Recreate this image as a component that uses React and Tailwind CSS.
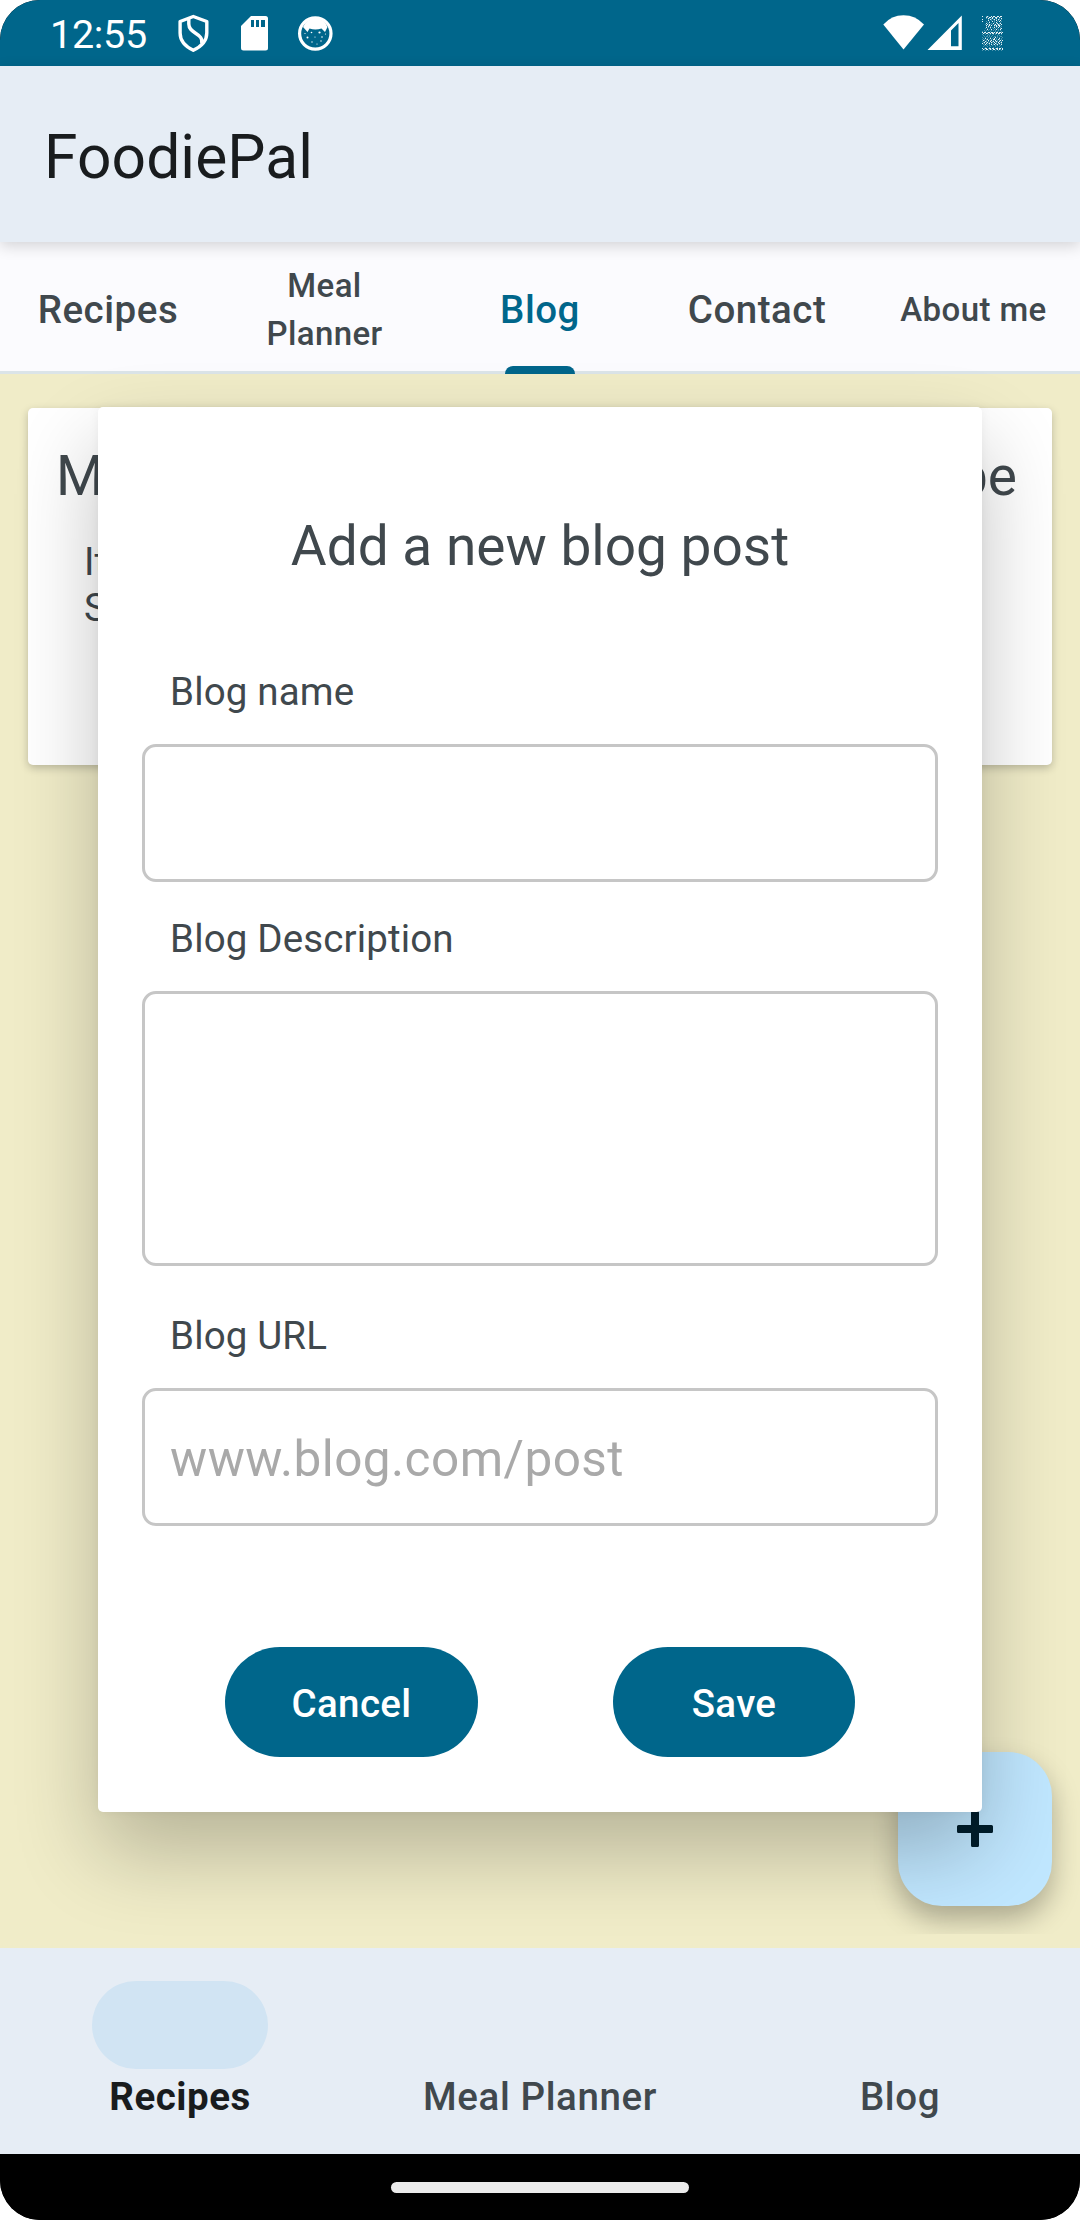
import React from "react";

const tabs = [
  { label: "Recipes", cls: "text-[38.5px] tracking-[0.55px]" },
  { label: "Meal Planner", cls: "pl-[1px] text-[33px] tracking-[0.4px]", inner: "w-[130px]" },
  { label: "Blog", cls: "text-[38.5px] tracking-[0.5px]", active: true },
  { label: "Contact", cls: "pl-[2px] text-[38.5px] tracking-[0.5px]" },
  { label: "About me", cls: "pl-[3px] text-[33px] tracking-[0.4px]" },
];

// Dithered battery glyph: one character per pixel, "#" bright and "+" dim.
const battery = [
  "#...+#+..#.##..##.##.",
  "....#+.##.#+.##+.#+..",
  "....+.#+.+#..+#..+.#.",
  "#.....+.#+.+#.+.#+.+.",
  "......#..+..+.#.+.#..",
  "#...+..+..#.+..+.#.+.",
  ".....+.#....+.#...+..",
  "....#.+..+.#..+#.+#..",
  "...+.#.#+.+.+#.+#+.#.",
  "....#.+#.#..#+#.##+..",
  "....+.#.+...+.#+.#.+.",
  "....#.+.#.+.#.+.#.+..",
  "...+.+..+..+.+.+..+#.",
  ".....#.+.#..+.#.+.#..",
  "..+.+.+..+.+.+..+.+..",
  "+..+....+....+.+...+.",
  "#.##.+##.##+#.##.##+#",
  ".#+.##.+#.##.+#.##.#.",
  "+..+..+.+..+.+..+..+.",
  ".+...+.+..+....+.+...",
  "..+.++.+.+..++.+..++.",
  "+..+..+.+..+.#.+.+..+",
  ".+.#.+..#.+.#.+..#.+.",
  "+.+.+#.+.+.##.+.#+.+.",
  ".#+.+.#.+#.+.#.+.+#.#",
  "+..#+.+.#.+#.+#+.#.+.",
  ".+#.+#.+.#+.#.+.#.+#.",
  "#.+.#.+#.+.+.#+.+#.+.",
  ".+.#.+.+.#.+#.+#.+.#.",
  "..+.+..+..+..+.+..+..",
  ".+...+..+....+...+...",
  "...+...+...+...+...+.",
  "#.+##.+##.##.+##.##.#",
  ".#+.##.+#+.##.+#.#+.#",
  "+..+..+...+..+..+..+.",
];

function StatusBar() {
  return (
    <div className="flex h-[66px] shrink-0 items-center bg-[#00668b] pl-[50px] text-white">
      <span className="w-[124px] whitespace-nowrap pt-[4px] text-[39.5px] leading-[66px] tracking-[-0.3px]">12:55</span>
      <svg className="h-[66px] w-[190px]" viewBox="0 0 190 66">
        <g transform="translate(-13.700 0)" fill="none" stroke="#fff" strokeWidth="3.4" strokeLinejoin="round">
          <path d="M33 16.500 46.500 21.500V33C46.500 41 41 46.500 33 50.300 25 46.500 19.800 41 19.800 33V21.500Z" />
          <path d="M28.500 18.500V24C28.500 34 43.500 33 41.500 43.500" />
        </g>
        <path d="M77 16H91.500Q94 16 94 18.500V48Q94 50.500 91.500 50.500H69.500Q67 50.500 67 48V26Z" fill="#fff" />
        <path d="M77 20h3v7h-3zM82 20h3v7h-3zM87 20h4v7h-4z" fill="#00668b" />
        <circle cx="141.300" cy="33.500" r="15.700" fill="none" stroke="#fff" strokeWidth="3.2" />
        <path d="M129 27Q132 19 141.300 18.500 151 19 153.500 27L151 32 147.500 28.500Q141.300 30.500 135.500 28.500L133.500 32Z" fill="#fff" />
        <g fill="#fff">
          <circle cx="137.500" cy="32.500" r=".8" /><circle cx="145.500" cy="32.500" r="1.100" />
          <circle cx="133.500" cy="37.500" r="1" /><circle cx="141" cy="37" r=".6" />
          <circle cx="148" cy="37" r=".8" /><circle cx="138" cy="42" r=".7" />
          <circle cx="143" cy="44" r=".6" /><circle cx="147" cy="41" r=".7" />
          <circle cx="131" cy="33.500" r=".6" /><circle cx="151.500" cy="34" r=".6" />
        </g>
      </svg>
      <svg className="ml-auto h-[66px] w-[197px]" viewBox="0 0 197 66">
        <path d="M0.300 24.500Q8.500 15.300 20.500 15.300 32.500 15.300 41 24.500L20.500 49.500Z" fill="#fff" />
        <path fillRule="evenodd" d="M44.500 50 78.800 15.500V50ZM68 30.500V46.300H75.500V23Z" fill="#fff" />
        <g transform="translate(99 16)" fill="#fff">
          {battery.map((row, y) =>
            row.split("").map((c, x) =>
              c === "." ? null : <rect key={x + "-" + y} x={x} y={y} width="1" height="1" opacity={c === "#" ? 0.9 : 0.3} />
            )
          )}
        </g>
      </svg>
    </div>
  );
}

function Field({ label, height, gap, placeholder }) {
  return (
    <label className={"flex flex-col " + gap}>
      <span className="ml-[28px] text-[38.5px] leading-[46px] tracking-[0.15px]">{label}</span>
      <input
        placeholder={placeholder}
        className={"mt-[29px] w-full rounded-[14px] border-[3px] border-[#c6c6c6] bg-white px-[25px] pt-[4px] text-[49.5px] tracking-[0.45px] placeholder:text-[#a9a9a9] outline-none " + height}
      />
    </label>
  );
}

export default function App() {
  return (
    <div className="relative flex h-[2220px] w-[1080px] flex-col overflow-hidden rounded-[40px] bg-black font-['Roboto',sans-serif] text-[#40484d]">
      <StatusBar />
      <header className="relative z-10 flex h-[176px] shrink-0 items-center bg-[#e6edf5] px-[44px] text-[60.5px] text-[#191c1e] shadow-[0_4px_14px_rgba(0,0,0,0.16)]">
        <h1 className="pt-[9px] tracking-[0.1px]">FoodiePal</h1>
      </header>
      <nav className="grid h-[132px] shrink-0 grid-cols-5 border-b-[3px] border-[#dbe4e8] bg-[#fbfbfe]">
        {tabs.map((t) => (
          <div key={t.label} className={"relative flex items-center justify-center whitespace-nowrap pt-[7px] text-center font-medium leading-[48px] " + t.cls + (t.active ? " text-[#00668b]" : "")}>
            <span className={t.inner ? "w-[130px] whitespace-normal" : ""}>{t.label}</span>
            {t.active && <i className="absolute -bottom-[3px] left-[73px] h-[8px] w-[70px] rounded-t-[8px] bg-[#00668b]" />}
          </div>
        ))}
      </nav>
      <main className="h-[1574px] shrink-0 bg-[#f0ecc8] px-[28px] pt-[34px]">
        <article className="h-[357px] rounded-[5px] bg-white px-[28px] pt-[36px] shadow-[0_3px_8px_rgba(0,0,0,0.22)]">
          <h2 className="flex justify-between text-[55px] leading-[64px]"><span>My</span><span className="mr-[7px]">Recipe</span></h2>
          <p className="ml-[28px] mt-[31px] text-[38.5px] leading-[46px]">It<br />S</p>
        </article>
      </main>
      <button className="absolute left-[898px] top-[1752px] flex size-[154px] items-center justify-center rounded-[44px] bg-[#c0e7ff] shadow-[0_14px_28px_rgba(0,0,0,0.28)] [clip-path:inset(-28px)]">
        <svg width="36" height="36" viewBox="0 0 36 36"><path d="M15.500 0h5q1.500 0 1.500 1.500V14h12.500q1.500 0 1.500 1.500v5q0 1.500-1.500 1.500H22v12.500q0 1.500-1.500 1.500h-5q-1.500 0-1.500-1.500V22H1.500Q0 22 0 20.500v-5Q0 14 1.500 14H14V1.500Q14 0 15.500 0Z" fill="#001e2c" /></svg>
      </button>
      <nav className="relative grid h-[206px] shrink-0 grid-cols-3 bg-[#e6edf5] text-center text-[38.5px] font-medium leading-[46px] tracking-[0.6px]">
        {["Recipes", "Meal Planner", "Blog"].map((n, i) => (
          <div key={n} className={"flex flex-col items-center pt-[33px] " + (i === 0 ? "font-bold tracking-[0.5px] text-[#191c1e]" : "")}>
            <i className={"h-[88px] w-[176px] rounded-full " + (i === 0 ? "bg-[#d1e4f3]" : "")} />
            <span className="mt-[5px]">{n}</span>
          </div>
        ))}
      </nav>
      <div className="flex h-[66px] shrink-0 items-center justify-center bg-black">
        <i className="h-[11px] w-[298px] rounded-full bg-[#ebebeb]" />
      </div>
      <section className="absolute left-[98px] top-[407px] z-20 flex h-[1405px] w-[884px] flex-col rounded-[5px] bg-white px-[44px] pt-[107px] shadow-[0_40px_84px_rgba(0,0,0,0.24),0_0_12px_rgba(0,0,0,0.05)]">
        <h2 className="text-center text-[55px] leading-[64px]">Add a new blog post</h2>
        <Field label="Blog name" gap="mt-[91px]" height="h-[138px]" />
        <Field label="Blog Description" gap="mt-[34px]" height="h-[275px]" />
        <Field label="Blog URL" gap="mt-[47px]" height="h-[138px]" placeholder="www.blog.com/post" />
        <div className="mt-[121px] flex pl-[83px] text-[38.5px] font-medium tracking-[0.35px] text-white">
          <button className="h-[110px] w-[253px] rounded-full bg-[#00668b] pt-[3px]">Cancel</button>
          <button className="ml-[135px] h-[110px] w-[242px] rounded-full bg-[#00668b] pt-[3px]">Save</button>
        </div>
      </section>
    </div>
  );
}
